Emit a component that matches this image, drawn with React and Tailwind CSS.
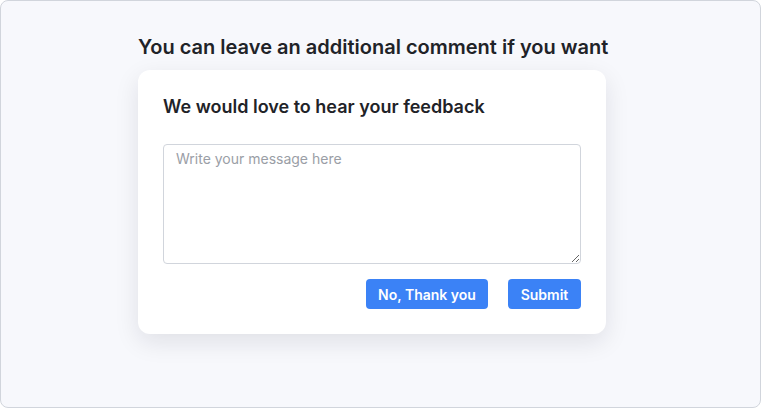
import React from 'react';

const App = () => {
  return (
    <div className="h-[408px] w-[761px] font-[family-name:Inter,sans-serif]">
      <div className="h-full w-full rounded-lg border border-gray-300 bg-[#f7f8fc] pt-[32px]">
        <div className="ml-[137px] w-[468px]">
          <h1 className="whitespace-nowrap text-[20px] font-semibold leading-[28px] text-[#1f2328]">
            You can leave an additional comment if you want
          </h1>
          <div className="mt-[9px] rounded-xl bg-white px-[25px] pb-[25px] pt-[25px] shadow-[0_8px_24px_rgba(15,23,42,0.10)]">
            <h2 className="text-[18px] font-semibold leading-[24px] text-[#1f2328]">
              We would love to hear your feedback
            </h2>
            <textarea
              className="mt-[25px] block h-[120px] w-full rounded border border-gray-300 px-3 pt-[3px] font-[family-name:Inter,sans-serif] text-[14px] text-gray-700 placeholder:text-[#9a9ea6] outline-none"
              placeholder="Write your message here"
            />
            <div className="mt-[15px] flex justify-end gap-[20px]">
              <button className="h-[30px] w-[122px] rounded bg-[#3b82f6] text-[14px] font-semibold text-white">
                No, Thank you
              </button>
              <button className="h-[30px] w-[73px] rounded bg-[#3b82f6] text-[14px] font-semibold text-white">
                Submit
              </button>
            </div>
          </div>
        </div>
      </div>
    </div>
  );
};

export default App;
